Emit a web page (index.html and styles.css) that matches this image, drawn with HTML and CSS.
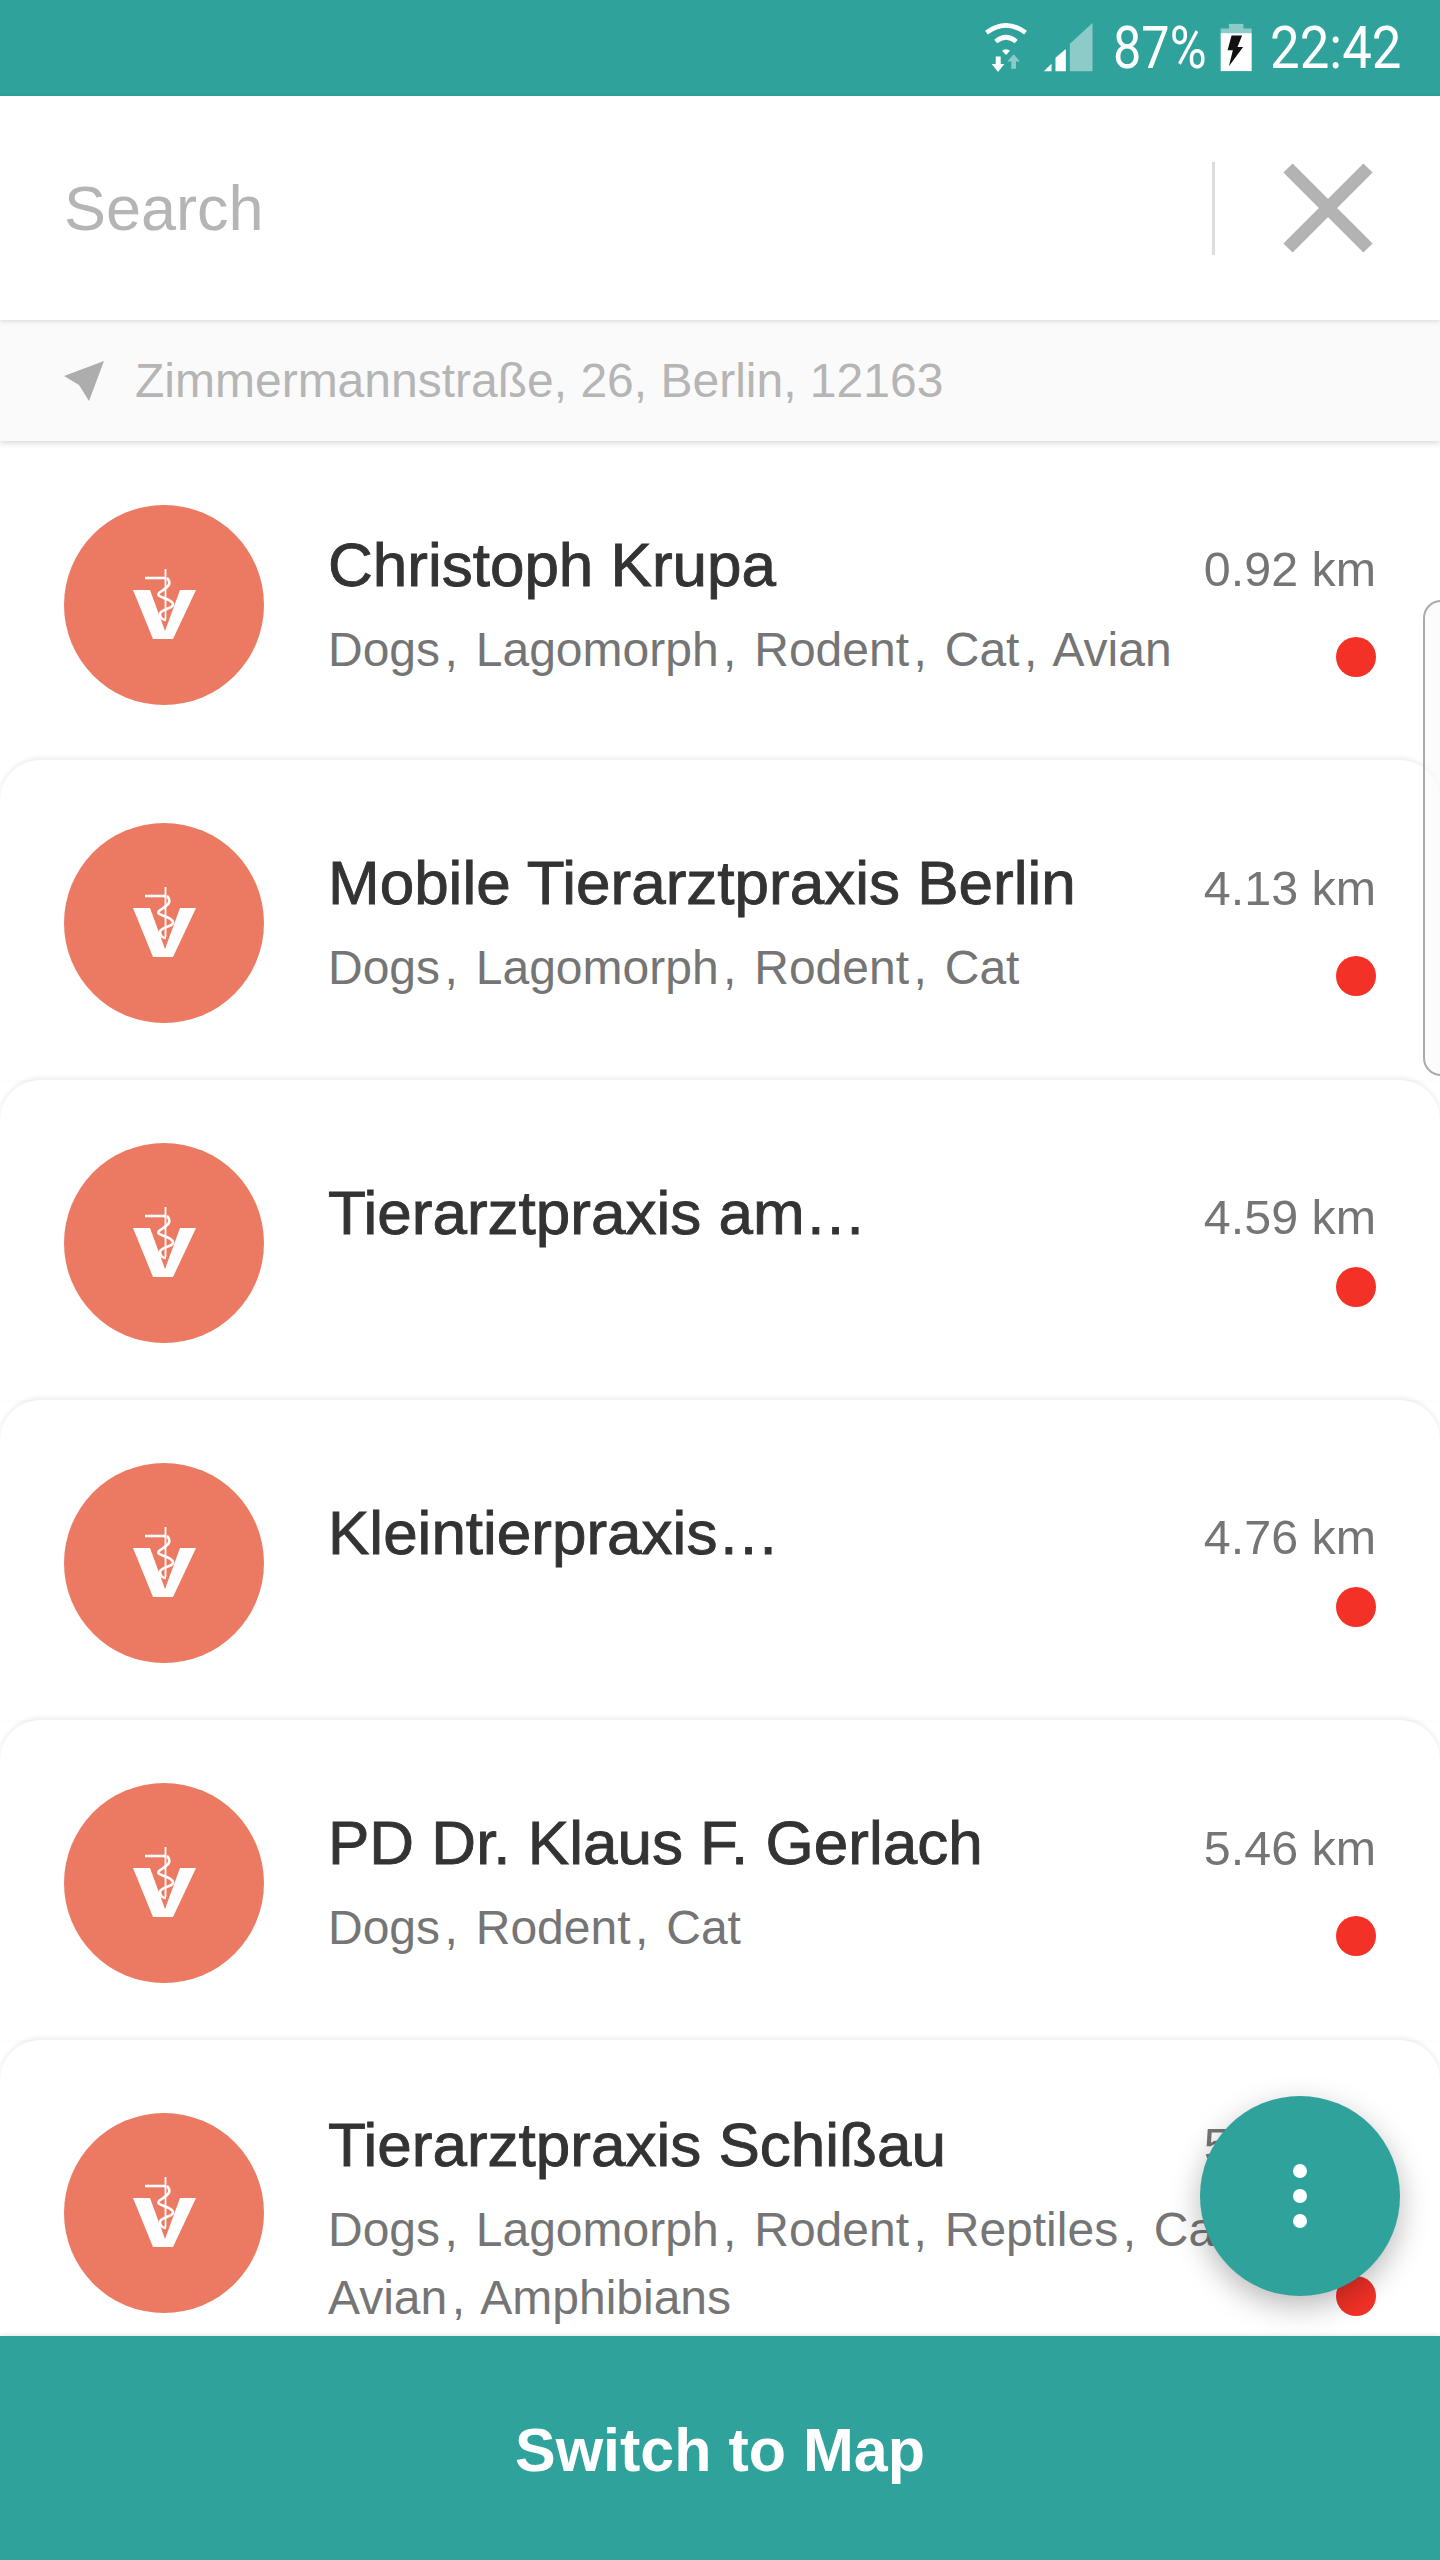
FILE: index.html
```html
<!DOCTYPE html>
<html lang="en">
<head>
    <meta charset="UTF-8">
    <meta name="viewport" content="width=device-width, initial-scale=1.0">
    <title>Vet Search</title>
    <link rel="stylesheet" href="styles.css">
</head>
<body>
    <svg class="defs" width="0" height="0" aria-hidden="true">
        <symbol id="vet-logo" viewBox="0 0 200 200">
            <circle cx="100" cy="100" r="100" fill="#ec7a62"/>
            <path d="M69 85H86L101 126L116 85H132L109 134H89Z" fill="#fff"/>
            <path d="M101.5 64V114" stroke="#fff" stroke-width="1.8" fill="none"/>
            <path d="M81 73H101" stroke="#fff" stroke-width="2.6" fill="none"/>
            <path d="M103 73C110 80 100 84 95 88C91 93 108 93 109 99C110 104 96 104 96 109C96 113 99 115 102 115" stroke="#fff" stroke-width="2.6" fill="none"/>
        </symbol>
    </svg>

    <div class="app">
        <div class="status-bar">
            <svg class="icon-wifi" viewBox="130 60 135 160">
                <path d="M137 95Q196 52 255 95" stroke="#fff" stroke-width="14" fill="none"/>
                <path d="M165 122Q196 96 227 122" stroke="#fff" stroke-width="14" fill="none"/>
                <path d="M184 150Q196 140 208 150L196 163Z" fill="#fff"/>
                <path d="M165 167H180V190H191L172 214L153 190H165Z" fill="#fff"/>
                <path d="M212 204H226V182H238L219 160L200 182H212Z" fill="#8ccbc8"/>
            </svg>
            <svg class="icon-signal" viewBox="305 65 155 150">
                <path d="M310 213L333 190V213Z" fill="#fff"/>
                <path d="M345 213V172L376 146V213Z" fill="#fff"/>
                <path d="M388 213V130L456 68V213Z" fill="#8ccbc8"/>
            </svg>
            <span class="status-text status-percent">87%</span>
            <svg class="icon-battery" viewBox="845 65 100 150">
                <rect x="872" y="70" width="44" height="16" fill="#8ccbc8"/>
                <rect x="847" y="84" width="94" height="15" fill="#8ccbc8"/>
                <rect x="847" y="98" width="94" height="115" fill="#fff"/>
                <path d="M880 105H912L898 140H915L872 198L884 150H868Z" fill="#111"/>
            </svg>
            <span class="status-text status-time">22:42</span>
        </div>

        <div class="search-bar">
            <span class="search-placeholder">Search</span>
            <span class="search-divider"></span>
            <svg class="icon-close" viewBox="0 0 90 90">
                <path d="M5 5L85 85M85 5L5 85" stroke="#b3b3b3" stroke-width="13" fill="none"/>
            </svg>
        </div>

        <div class="address-bar">
            <svg class="icon-nav" viewBox="0 0 40 40">
                <path d="M0 15L40 0L25 40L15 24Z" fill="#adadad"/>
            </svg>
            <span>Zimmermannstraße, 26, Berlin, 12163</span>
        </div>

        <div class="list">
            <div class="row row-first">
                <svg class="avatar"><use href="#vet-logo"/></svg>
                <div class="info">
                    <div class="name">Christoph Krupa</div>
                    <div class="tags">Dogs<i>,</i> Lagomorph<i>,</i> Rodent<i>,</i> Cat<i>,</i> Avian</div>
                </div>
                <div class="side">
                    <span class="distance">0.92 km</span>
                    <span class="dot"></span>
                </div>
            </div>

            <div class="row">
                <svg class="avatar"><use href="#vet-logo"/></svg>
                <div class="info">
                    <div class="name">Mobile Tierarztpraxis Berlin</div>
                    <div class="tags">Dogs<i>,</i> Lagomorph<i>,</i> Rodent<i>,</i> Cat</div>
                </div>
                <div class="side">
                    <span class="distance">4.13 km</span>
                    <span class="dot"></span>
                </div>
            </div>

            <div class="row row-short">
                <svg class="avatar"><use href="#vet-logo"/></svg>
                <div class="info">
                    <div class="name">Tierarztpraxis am…</div>
                </div>
                <div class="side">
                    <span class="distance">4.59 km</span>
                    <span class="dot"></span>
                </div>
            </div>

            <div class="row row-short">
                <svg class="avatar"><use href="#vet-logo"/></svg>
                <div class="info">
                    <div class="name">Kleintierpraxis…</div>
                </div>
                <div class="side">
                    <span class="distance">4.76 km</span>
                    <span class="dot"></span>
                </div>
            </div>

            <div class="row">
                <svg class="avatar"><use href="#vet-logo"/></svg>
                <div class="info">
                    <div class="name">PD Dr. Klaus F. Gerlach</div>
                    <div class="tags">Dogs<i>,</i> Rodent<i>,</i> Cat</div>
                </div>
                <div class="side">
                    <span class="distance">5.46 km</span>
                    <span class="dot"></span>
                </div>
            </div>

            <div class="row row-tall">
                <svg class="avatar"><use href="#vet-logo"/></svg>
                <div class="info">
                    <div class="name">Tierarztpraxis Schißau</div>
                    <div class="tags">Dogs<i>,</i> Lagomorph<i>,</i> Rodent<i>,</i> Reptiles<i>,</i> Cat<i>,</i><br>Avian<i>,</i> Amphibians</div>
                </div>
                <div class="side">
                    <span class="distance">5.61 km</span>
                    <span class="dot"></span>
                </div>
            </div>
        </div>

        <button class="map-btn">Switch to Map</button>

        <div class="edge-handle"></div>
        <div class="fab">
            <span></span>
            <span></span>
            <span></span>
        </div>
    </div>
</body>
</html>
```

FILE: styles.css
```css
body {
    margin: 0;
    font-family: "Liberation Sans", Arial, sans-serif;
    background-color: #fff;
    overflow: hidden;
}
.defs {
    position: absolute;
}
.app {
    position: relative;
    width: 1440px;
    height: 2560px;
    display: flex;
    flex-direction: column;
    overflow: hidden;
}

/* Status bar */
.status-bar {
    height: 96px;
    flex: none;
    background-color: #30a29c;
    display: flex;
    align-items: center;
    padding-left: 984px;
}
.status-bar svg {
    flex: none;
}
.icon-wifi {
    width: 45px;
    height: 53px;
    margin-top: -2px;
}
.icon-signal {
    width: 52px;
    height: 50px;
    margin-left: 13px;
    margin-top: -2px;
}
.icon-battery {
    width: 33px;
    height: 50px;
    margin-left: 13px;
    margin-top: -2px;
}
.status-text {
    font-family: Roboto, sans-serif;
    font-size: 60px;
    line-height: 96px;
    color: #fff;
    white-space: nowrap;
    transform-origin: left center;
}
.status-percent {
    width: 94px;
    margin-left: 19px;
    transform: scaleX(0.84);
}
.status-time {
    width: 130px;
    margin-left: 17px;
    transform: scaleX(0.88);
}

/* Search */
.search-bar {
    height: 224px;
    flex: none;
    display: flex;
    align-items: center;
    padding: 0 67px 0 64px;
    background-color: #fff;
    box-shadow: 0 1px 5px rgba(0,0,0,0.15);
    position: relative;
    z-index: 3;
}
.search-placeholder {
    flex: 1;
    font-size: 63px;
    color: #b5b5b5;
}
.search-divider {
    width: 3px;
    height: 93px;
    background-color: #ddd;
}
.icon-close {
    width: 90px;
    height: 90px;
    margin-left: 68px;
}
.address-bar {
    height: 121px;
    flex: none;
    display: flex;
    align-items: center;
    padding-left: 64px;
    background-color: #fafafa;
    color: #b5b5b5;
    font-size: 48px;
    box-shadow: 0 2px 6px rgba(0,0,0,0.16);
    position: relative;
    z-index: 2;
}
.icon-nav {
    width: 40px;
    height: 40px;
    margin-right: 31px;
}

/* List */
.list {
    flex: 1;
    min-height: 0;
    overflow: hidden;
}
.row {
    height: 320px;
    box-sizing: border-box;
    padding: 6px 64px 0;
    display: flex;
    align-items: center;
    background-color: #fff;
    border-radius: 40px 40px 0 0;
    box-shadow: 0 -2px 5px rgba(0,0,0,0.08);
}
.row-first {
    height: 319px;
    padding-top: 8px;
    border-radius: 0;
    box-shadow: none;
}
.avatar {
    width: 200px;
    height: 200px;
    flex: none;
}
.info {
    flex: 1;
    min-width: 0;
    height: 156px;
    margin-left: 64px;
    margin-top: 6px;
}
.name {
    font-size: 62px;
    line-height: 70px;
    color: #333;
    -webkit-text-stroke: 0.9px #333;
    white-space: nowrap;
}
.tags {
    margin-top: 16px;
    font-size: 48px;
    line-height: 68px;
    color: #757575;
    white-space: nowrap;
}
.tags i {
    font-style: normal;
    margin: 0 4.5px;
}
.side {
    width: 172px;
    height: 138px;
    margin-top: 7px;
    flex: none;
    display: flex;
    flex-direction: column;
    justify-content: space-between;
    align-items: flex-end;
}
.distance {
    font-size: 48.4px;
    line-height: 60px;
    color: #757575;
    white-space: nowrap;
}
.dot {
    width: 40px;
    height: 40px;
    border-radius: 50%;
    background-color: #f33127;
}
.row-short .info {
    height: 136px;
    align-self: flex-start;
    margin-top: 92px;
}
.row-short .side {
    height: 120px;
}
.row-tall {
    height: 340px;
}
.row-tall .info {
    height: 224px;
    margin-top: 18px;
}
.row-tall .side {
    height: 201px;
    margin-top: 5px;
}

/* Bottom */
.map-btn {
    height: 224px;
    flex: none;
    border: none;
    padding: 3px 0 0;
    background-color: #30a29c;
    color: #fff;
    font-family: inherit;
    font-size: 61px;
    font-weight: bold;
    position: relative;
    z-index: 2;
    box-shadow: 0 -1px 5px rgba(0,0,0,0.1);
}
.edge-handle {
    position: absolute;
    top: 600px;
    right: -20px;
    width: 37px;
    height: 476px;
    box-sizing: border-box;
    border: 2px solid #aaa;
    border-radius: 18px;
    background-color: rgba(250,250,250,0.6);
    z-index: 3;
}
.fab {
    position: absolute;
    left: 1200px;
    top: 2096px;
    width: 200px;
    height: 200px;
    border-radius: 50%;
    background-color: #30a29c;
    box-shadow: 0 10px 30px rgba(0,0,0,0.28);
    z-index: 4;
    display: flex;
    flex-direction: column;
    align-items: center;
    justify-content: center;
    gap: 11px;
}
.fab span {
    width: 14px;
    height: 14px;
    border-radius: 50%;
    background-color: #fff;
}
```
